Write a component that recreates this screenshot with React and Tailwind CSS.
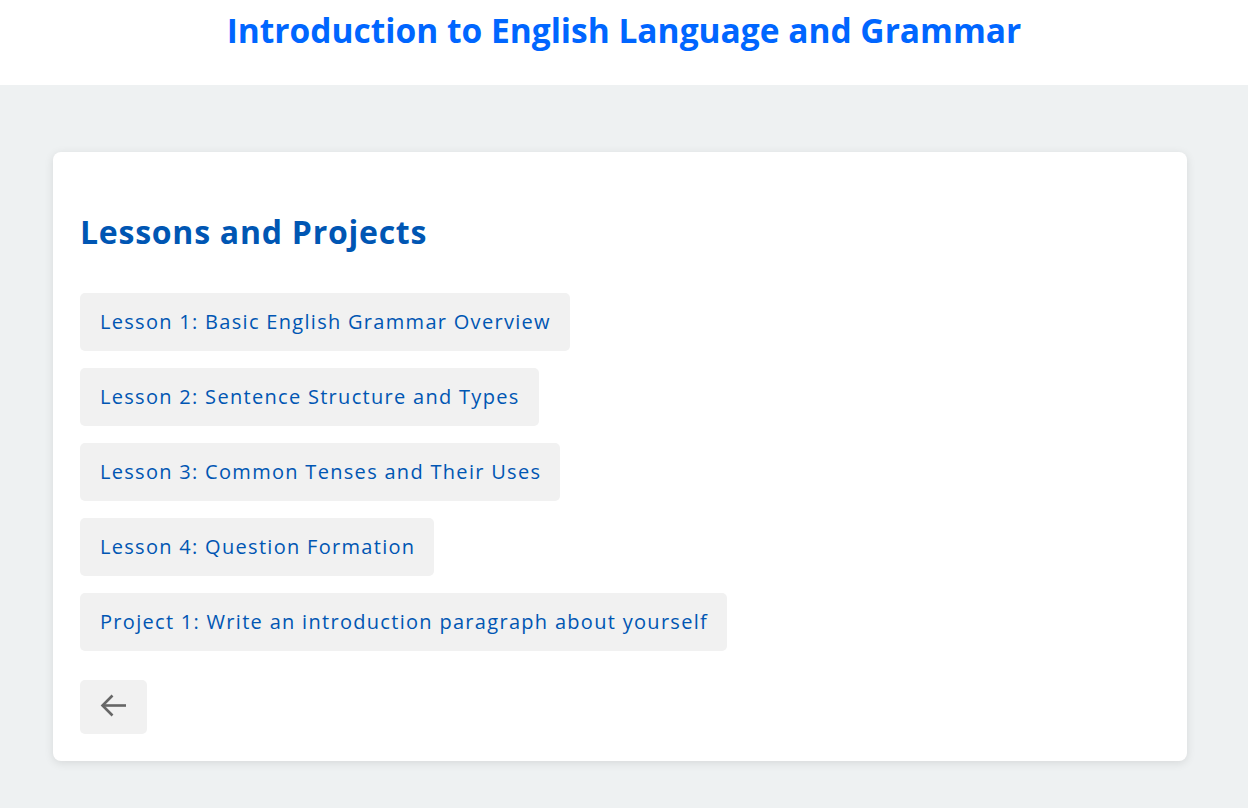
const items = [
  "Lesson 1: Basic English Grammar Overview",
  "Lesson 2: Sentence Structure and Types",
  "Lesson 3: Common Tenses and Their Uses",
  "Lesson 4: Question Formation",
  "Project 1: Write an introduction paragraph about yourself",
];

export default function App() {
  return (
    <div className="min-h-[808px] bg-[#eef1f2] font-['Open_Sans',sans-serif]">
      <header className="h-[85px] bg-white flex justify-center">
        <h1 className="mt-[9px] text-[33.5px] leading-[42px] font-bold text-[#0066ff]">
          Introduction to English Language and Grammar
        </h1>
      </header>

      <main className="pt-[67px] pb-[47px]">
        <div className="ml-[53px] w-[1134px] rounded-lg bg-white px-[27px] pt-[61px] pb-[27px] shadow-[0_2px_10px_rgba(0,0,0,0.1)]">
          <h2 className="text-[32px] leading-[38px] font-bold tracking-[0.75px] text-[#0056b3]">Lessons and Projects</h2>

          <ul className="mt-[42px] flex flex-col items-start gap-[17px]">
            {items.map((t) => (
              <li key={t}>
                <button className="h-[58px] rounded-[5px] bg-[#f1f1f1] pl-5 pr-[19px] text-[20px] tracking-[1.3px] text-[#0056b3]">
                  {t}
                </button>
              </li>
            ))}
          </ul>

          <button className="mt-[29px] flex h-[54px] w-[67px] items-center justify-center rounded-[5px] bg-[#f1f1f1] pb-[3px] text-[#666666]">
            <svg width="27" height="23" viewBox="0 0 27 23" fill="none" stroke="currentColor" strokeWidth="2.6" strokeLinejoin="miter">
              <path d="M26 11.5H2.5" />
              <path d="M12.5 1.5L2.5 11.5L12.5 21.5" />
            </svg>
          </button>
        </div>
      </main>
    </div>
  );
}
